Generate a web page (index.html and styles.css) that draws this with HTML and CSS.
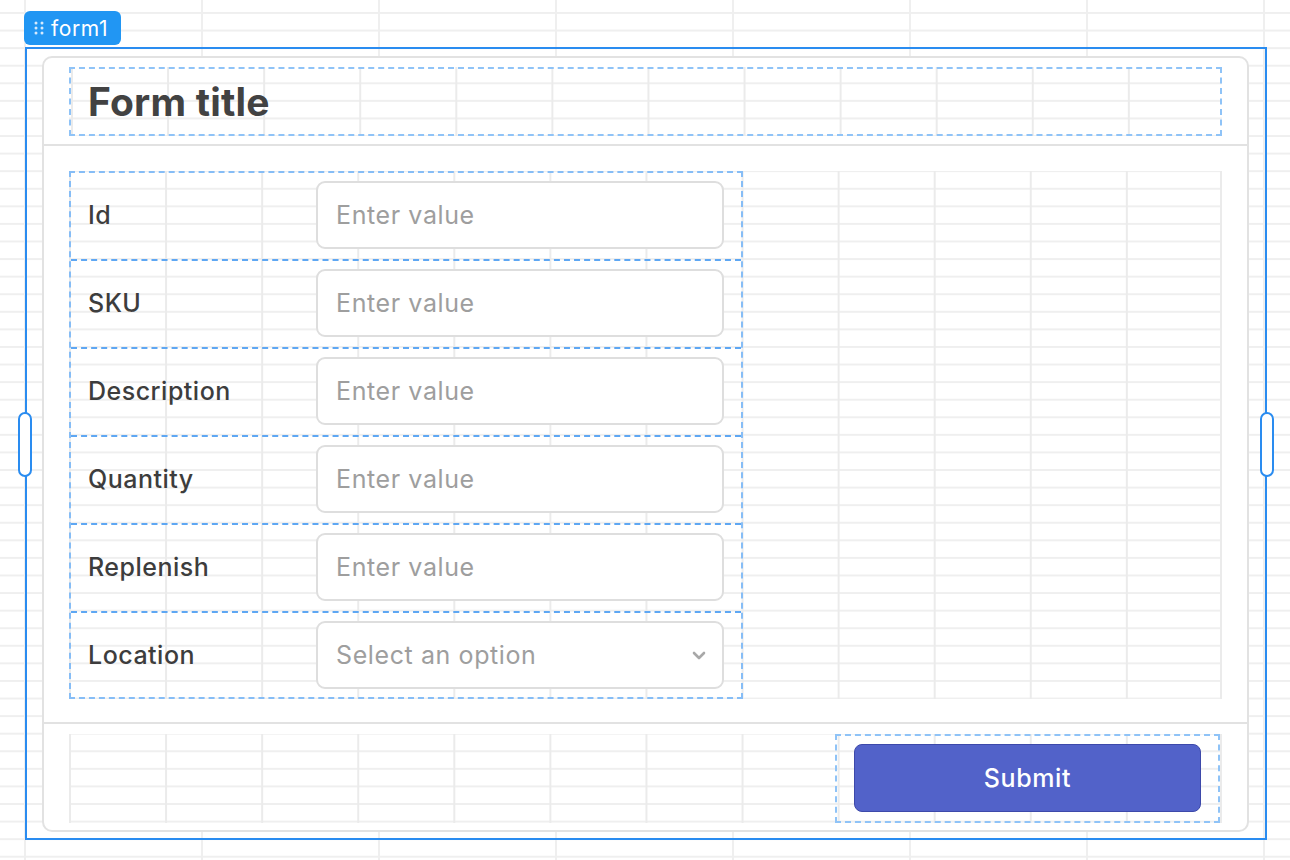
FILE: index.html
```html
<!DOCTYPE html>
<html lang="en">
<head>
<meta charset="utf-8">
<title>form1</title>
<link rel="stylesheet" href="styles.css">
</head>
<body>
<div class="canvas">
  <div class="tag">
    <svg class="tag-dots" width="10" height="14" viewBox="0 0 10 14">
      <circle cx="2" cy="2" r="1.5"/><circle cx="8" cy="2" r="1.5"/>
      <circle cx="2" cy="7" r="1.5"/><circle cx="8" cy="7" r="1.5"/>
      <circle cx="2" cy="12" r="1.5"/><circle cx="8" cy="12" r="1.5"/>
    </svg>
    <span>form1</span>
  </div>
  <div class="selection">
    <span class="handle handle-left"></span>
    <span class="handle handle-right"></span>
    <div class="card">
      <div class="card-header">
        <div class="area title-box"><h1 class="title">Form title</h1></div>
      </div>
      <div class="card-body">
        <div class="area body-area">
          <div class="fields">
            <div class="row"><label class="label">Id</label><div class="input">Enter value</div></div>
            <div class="row"><label class="label">SKU</label><div class="input">Enter value</div></div>
            <div class="row"><label class="label">Description</label><div class="input">Enter value</div></div>
            <div class="row"><label class="label">Quantity</label><div class="input">Enter value</div></div>
            <div class="row"><label class="label">Replenish</label><div class="input">Enter value</div></div>
            <div class="row"><label class="label">Location</label><div class="input select"><span>Select an option</span>
              <svg class="chevron" width="14" height="9" viewBox="0 0 14 9"><path d="M2 2 L7 7 L12 2" fill="none" stroke="#a8a8a8" stroke-width="2.6" stroke-linecap="round" stroke-linejoin="round"/></svg></div></div>
          </div>
        </div>
      </div>
      <div class="card-footer">
        <div class="area footer-area">
          <div class="submit-box"><button class="submit">Submit</button></div>
        </div>
      </div>
    </div>
  </div>
</div>
</body>
</html>
```
FILE: styles.css
```css
html, body {
  margin: 0;
  height: 100%;
}
body {
  font-family: Inter, "Noto Sans", "Liberation Sans", sans-serif;
  background-color: #ffffff;
  background-image:
    linear-gradient(to right, #efefef 2px, transparent 2px),
    linear-gradient(to bottom, #efefef 2px, transparent 2px);
  background-size: 177px 100%, 100% 17.587px;
  background-position: 24px 0, 0 12px;
  overflow: hidden;
}
.canvas {
  padding: 11px 0 0 24px;
  width: 1290px;
  height: 860px;
  box-sizing: border-box;
}
.tag {
  display: flex;
  align-items: center;
  gap: 7px;
  width: 97px;
  height: 34px;
  box-sizing: border-box;
  padding-left: 10px;
  background: #2196f3;
  border-radius: 6px;
  color: #ffffff;
  font-size: 21px;
  letter-spacing: 0.6px;
}
.tag-dots circle { fill: #d6eafd; }
.selection {
  position: relative;
  margin: 2px 0 0 1px;
  width: 1242px;
  height: 793px;
  box-sizing: border-box;
  border: 2px solid #2a8cf0;
  padding: 7px 0 0 15px;
}
.handle {
  position: absolute;
  top: 363px;
  width: 14px;
  height: 65px;
  box-sizing: border-box;
  background: #ffffff;
  border: 2px solid #2a8cf0;
  border-radius: 7px;
}
.handle-left { left: -9px; }
.handle-right { right: -9px; }
.card {
  width: 1207px;
  height: 776px;
  box-sizing: border-box;
  border: 2px solid #e2e2e2;
  border-radius: 10px;
  background: #ffffff;
  display: flex;
  flex-direction: column;
}
.area {
  background-color: #ffffff;
  background-image:
    linear-gradient(to right, #ebebeb 2px, transparent 2px),
    linear-gradient(to bottom, #efefef 2px, transparent 2px);
  background-size: 96.08px 100%, 100% 17.587px;
  background-position: 0 0, 0 12px;
  background-attachment: scroll, fixed;
  box-sizing: border-box;
  width: 1153px;
}
.card-header {
  padding: 9px 25px 8px;
  border-bottom: 2px solid #e2e2e2;
}
.title-box {
  height: 69px;
  border: 2px dashed #8fc3f7;
  display: flex;
  align-items: center;
  padding-left: 17px;
}
.title {
  margin: 0;
  font-size: 39px;
  font-weight: 700;
  color: #424242;
  letter-spacing: 0.2px;
}
.card-body {
  padding: 25px 25px 23px;
  border-bottom: 2px solid #e2e2e2;
}
.body-area {
  height: 528px;
  border-right: 2px solid #ebebeb;
}
.fields {
  width: 674px;
  height: 528px;
  box-sizing: border-box;
  border: 2px dashed #86bdf6;
}
.row {
  display: flex;
  align-items: center;
  height: 86px;
  box-sizing: content-box;
  padding: 0 17px 0 17px;
}
.row + .row {
  border-top: 2px dashed #5ea7f3;
}
.label {
  width: 228px;
  font-size: 25px;
  font-weight: 500;
  color: #3d3d3d;
  letter-spacing: 0.5px;
  margin-top: -2px;
}
.input {
  width: 408px;
  height: 68px;
  box-sizing: border-box;
  border: 2px solid #dedede;
  border-radius: 9px;
  background: #ffffff;
  display: flex;
  align-items: center;
  justify-content: space-between;
  padding: 0 16px 0 18px;
  font-size: 25px;
  letter-spacing: 0.6px;
  color: #9e9e9e;
  margin-top: -2px;
}
.chevron { margin-top: 1px; }
.card-footer {
  padding: 10px 25px 7px;
}
.footer-area {
  height: 89px;
  border-right: 2px solid #ebebeb;
  display: flex;
  justify-content: flex-end;
}
.submit-box {
  width: 385px;
  height: 89px;
  box-sizing: border-box;
  border: 2px dashed #8fc3f7;
  padding: 8px 17px 9px;
}
.submit {
  width: 100%;
  height: 68px;
  border: 1.5px solid #3d49aa;
  border-radius: 8px;
  background: #5262c9;
  color: #ffffff;
  font-family: Inter, "Noto Sans", "Liberation Sans", sans-serif;
  font-size: 25px;
  font-weight: 500;
  letter-spacing: 0.6px;
}
```
